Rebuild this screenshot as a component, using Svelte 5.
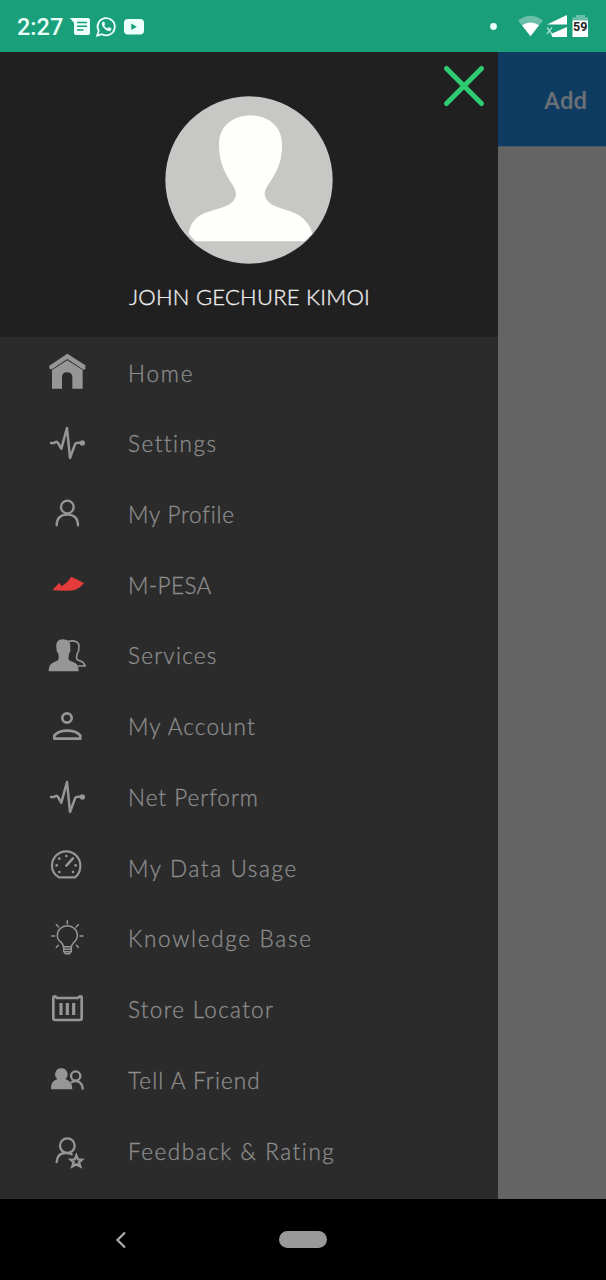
<script>
  const items = [
    { label: 'Home', icon: 'home', top: 25, spacing: 1.8 },
    { label: 'Settings', icon: 'pulse', top: 237, spacing: 1.5 },
    { label: 'My Profile', icon: 'profile', top: 15, spacing: 0.8 },
    { label: 'M-PESA', icon: 'mpesa', top: 227, spacing: 0.4 },
    { label: 'Services', icon: 'services', top: 19, spacing: 1.25 },
    { label: 'My Account', icon: 'account', top: 231, spacing: 1.15 },
    { label: 'Net Perform', icon: 'pulse', top: 237, spacing: 1 },
    { label: 'My Data Usage', icon: 'gauge', top: 236, spacing: 1.65 },
    { label: 'Knowledge Base', icon: 'bulb', top: 13, spacing: 1.7 },
    { label: 'Store Locator', icon: 'store', top: 225, spacing: 1.3 },
    { label: 'Tell A Friend', icon: 'friends', top: 17, spacing: 1.1 },
    { label: 'Feedback & Rating', icon: 'feedback', top: 229, spacing: 1.55 }
  ];
</script>

<div class="screen">
  <header class="status">
    <span class="time">2:27</span>
    <svg class="left-icons" width="80" height="24" viewBox="0 0 80 24" fill="#edfffa">
      <path d="M1 4h18q2 0 2 2v13q0 2-2 2H7q-2 0-2-2V9z" />
      <path d="M8 8.5h10M8 12.2h10M8 16h6.5" stroke="#199e7a" stroke-width="1.6" />
      <path d="M28.2 21.6l1.5-4.7a8.6 8.6 0 1 1 3.3 3.3z" fill="none" stroke="#edfffa" stroke-width="1.8" />
      <path d="M34.3 7.5q-2.2 1.3-1.1 4 2.4 4.8 6.9 5.8 2.2-.2 2.4-2.7l-2.7-1.5-1.4 1.5q-2.2-.9-3.3-3.1l1.1-1.2-1-2.6z" />
      <rect x="55" y="5" width="20" height="15.5" rx="4" />
      <path d="M62.3 9.5v6.4l5.5-3.2z" fill="#199e7a" />
    </svg>
    <svg class="right-icons" width="106" height="30" viewBox="0 0 106 30">
      <circle cx="8.5" cy="14.5" r="3.4" fill="#edfffa" />
      <path d="M33 8.500q12.500-9.500 25 0L45.500 24.200z" fill="#6bbfa8" />
      <path d="M37 13.200q8.500-5.600 17 0l-8.500 11z" fill="white" />
      <path d="M82 3v9.500H62zM82 15v10H67.500L66 22z" fill="white" />
      <path d="M62 15.500l5 6.500M67 15.500l-5 6.500" stroke="#a8e0d0" stroke-width="1.300" />
      <path d="M91 3h9v2.200h3V10H87.500V5.200H91z" fill="#6bbfa8" />
      <path d="M87.500 8.500H103V25H87.500z" fill="white" />
      <text x="95.200" y="19.200" text-anchor="middle">59</text>
    </svg>
  </header>

  <main>
    <aside class="drawer">
      <section class="account">
        <svg class="close" width="44" height="44" viewBox="0 0 44 44">
          <path d="M4.500 4.500l35 35M39.500 4.500l-35 35" stroke="#2fcb70" stroke-width="5" stroke-linecap="round" />
        </svg>
        <svg class="avatar" width="168" height="168" viewBox="46 32 504 504">
          <circle cx="298" cy="284" r="251" fill="#c7c7c6" />
          <path fill="#fefefd" d="M302 90C355 91 397 122 397 178C398 222 385 252 367 281C355 300 345 311 345 326Q347 350 377 363C410 375 440 380 462 401Q482 420 488 446L464 468H138L117 446Q119 421 137 402C157 381 195 375 227 363Q258 351 259 326C259 312 249 300 238 282C220 251 208 222 208 178C208 122 248 92 302 90Z" />
        </svg>
        <h1>JOHN GECHURE KIMOI</h1>
      </section>

      <nav>
        {#each items as item}
          <a class="row" href="#top">
            <svg class="icon" width="48" height="48" viewBox={`9 ${item.top} 144 144`}>
              {#if item.icon === 'home'}
                <path class="fill" d="M82 42L136 77V87Q132 93 126 87L82 58 38 87Q31 92 28 86V78z" />
                <path class="fill" d="M36 91L82 62 128 91V147H97V113Q96 98 81 98T66 113V147H36z" />
              {:else if item.icon === 'pulse'}
                <path class="line" stroke-width="7.500" d="M33 309H43Q49 302 54 309L64 326 81 264 90 354 106 311Q108 308 114 308H125" />
                <circle class="fill" cx="127" cy="309" r="8" />
              {:else if item.icon === 'profile'}
                <g class="line" stroke-width="7">
                  <circle cx="82" cy="66" r="19" /><path d="M50 121Q50 89 82 89T114 121" />
                </g>
              {:else if item.icon === 'mpesa'}
                <path fill="#e33a3a" d="M38 313L58 292 65 303Q83 292 94 274L132 293Q121 308 106 313Q91 318 38 315z" />
              {:else if item.icon === 'services'}
                <path class="fill" d="M70 44Q94 46 91 69Q93 80 87 88Q84 101 87 107L106 115Q116 120 116 140H26Q26 120 37 115L54 107Q58 101 55 88Q48 80 49 67Q47 43 70 44z" />
                <path class="line" stroke-width="5" d="M84 50Q100 47 109 51Q120 56 116 73Q118 80 112 86Q107 100 112 105Q120 109 129 113L136 124H115" />
              {:else if item.icon === 'account'}
                <circle class="line" stroke-width="8" cx="81" cy="279" r="14" />
                <path class="line" stroke-width="8" d="M43 341V331Q57 317 82 317T121 331V341z" />
              {:else if item.icon === 'gauge'}
                <path class="line" stroke-width="6.500" d="M57 339Q36 327 36 304A42.500 43 0 0 1 121 304Q121 327 105 339z" />
                <path class="line" stroke-width="7.500" d="M79 304L99 282" />
                <g class="fill"><circle cx="79" cy="275" r="4" /><circle cx="58" cy="283" r="4" /><circle cx="50" cy="303" r="4" /><circle cx="58" cy="323" r="4" /><circle cx="99" cy="323" r="4" /><circle cx="107" cy="303" r="4" /></g>
              {:else if item.icon === 'bulb'}
                <g class="line" stroke-width="4.500">
                  <path d="M70 111Q69 101 57 92Q51 84 52 77A30 29 0 0 1 112 77Q112 90 102 98Q96 104 94 111zM71 113V125L76 132H89L94 125V113M72 119H93M72 126H93M82 33V42M49 45L56 52M115 45L108 52M35 79H44M120 79H129M49 113L55 107M115 113L109 107" />
                </g>
              {:else if item.icon === 'store'}
                <path class="line" stroke-width="8" d="M40 263V325Q40 330 45 330H119Q125 330 125 325V262Q125 259 119 259L114 264H51L46 259Q40 259 40 263z" />
                <path class="line butt" stroke-width="9.500" d="M63 279V315M82 279V315M101 279V315" />
              {:else if item.icon === 'friends'}
                <path class="fill" d="M64 54A18 18 0 0 1 76 86Q97 92 97 117H33Q32 92 52 86A18 18 0 0 1 64 54z" />
                <g class="line" stroke-width="7"><circle cx="107" cy="77" r="14" /><path d="M95 95Q109 88 120 97Q128 104 128 115" /></g>
              {:else}
                <g class="line" stroke-width="7"><circle cx="82" cy="288" r="22" /><path d="M50 337Q52 309 78 310Q88 310 95 314" /></g>
                <path class="line star" stroke-width="7" d="M109 317L114 329 126 330 117 338 121 350 109 344 97 350 101 338 92 330 104 329z" />
              {/if}
            </svg>
            <span style:letter-spacing={`${item.spacing}px`}>{item.label}</span>
          </a>
        {/each}
      </nav>
    </aside>
    <div class="page"><div class="toolbar">Add</div></div>
  </main>

  <footer>
    <svg width="12" height="18" viewBox="0 0 12 18"><path d="M10 1.500L2.500 9 10 16.500" fill="none" stroke="#aaa" stroke-width="2.200" /></svg>
    <i class="pill"></i>
  </footer>
</div>

<style>
  :global(body) { margin: 0; background: #000; }
  .screen { width: 606px; height: 1280px; display: flex; flex-direction: column; overflow: hidden; }
  .status { height: 52px; flex: none; display: flex; align-items: center; background: #1a9f7b; color: #edfffa; box-sizing: border-box; padding-left: 17px; }
  .time { width: 52px; font: 500 23.500px Roboto, sans-serif; padding-top: 1px; white-space: nowrap; opacity: 0.99; }
  .left-icons { margin-bottom: 1px; }
  .right-icons { margin-left: auto; margin-right: 15px; margin-top: 2px; }
  .right-icons text { font: 700 12.500px Roboto, sans-serif; fill: #222; }
  main { height: 1147px; flex: none; display: flex; }
  .drawer { width: 498px; background: #2b2b2b; }
  .account { height: 285px; background: #202020; position: relative; display: flex; flex-direction: column; align-items: center; box-sizing: border-box; padding-top: 44px; }
  .close { position: absolute; left: 442px; top: 12px; }
  h1 { margin: 18px 0 0 1px; font: 300 22px/30px Lato, sans-serif; color: #f0f0f0; white-space: nowrap; letter-spacing: 0.250px; -webkit-text-stroke: 0.350px #f0f0f0; opacity: 0.99; }
  nav { display: flex; flex-direction: column; }
  .row { height: 70.730px; display: flex; align-items: center; padding-left: 43px; gap: 37px; color: #8f8f8f; text-decoration: none; font: 300 22.500px/30px Lato, sans-serif; white-space: nowrap; }
  .row span { padding-top: 2.500px; opacity: 0.99; -webkit-text-stroke: 0.300px #8f8f8f; }
  .icon { flex: none; }
  .fill { fill: #969696; }
  .line { fill: none; stroke: #969696; stroke-linejoin: round; stroke-linecap: round; }
  .butt { stroke-linecap: butt; }
  .star { stroke-linejoin: miter; }
  .page { flex: 1; background: #646464; }
  .toolbar { height: 95px; background: #0d3b61; border-bottom: 1px solid #4b5965; display: flex; align-items: center; justify-content: flex-end; padding: 3px 19px 0 0; box-sizing: border-box; font: 500 24px Roboto, sans-serif; color: #6b7075; }
  footer { height: 81px; background: #000; display: flex; align-items: center; padding-left: 115px; }
  .pill { width: 48px; height: 17px; border-radius: 9px; background: #999; margin-left: 152px; }
</style>
